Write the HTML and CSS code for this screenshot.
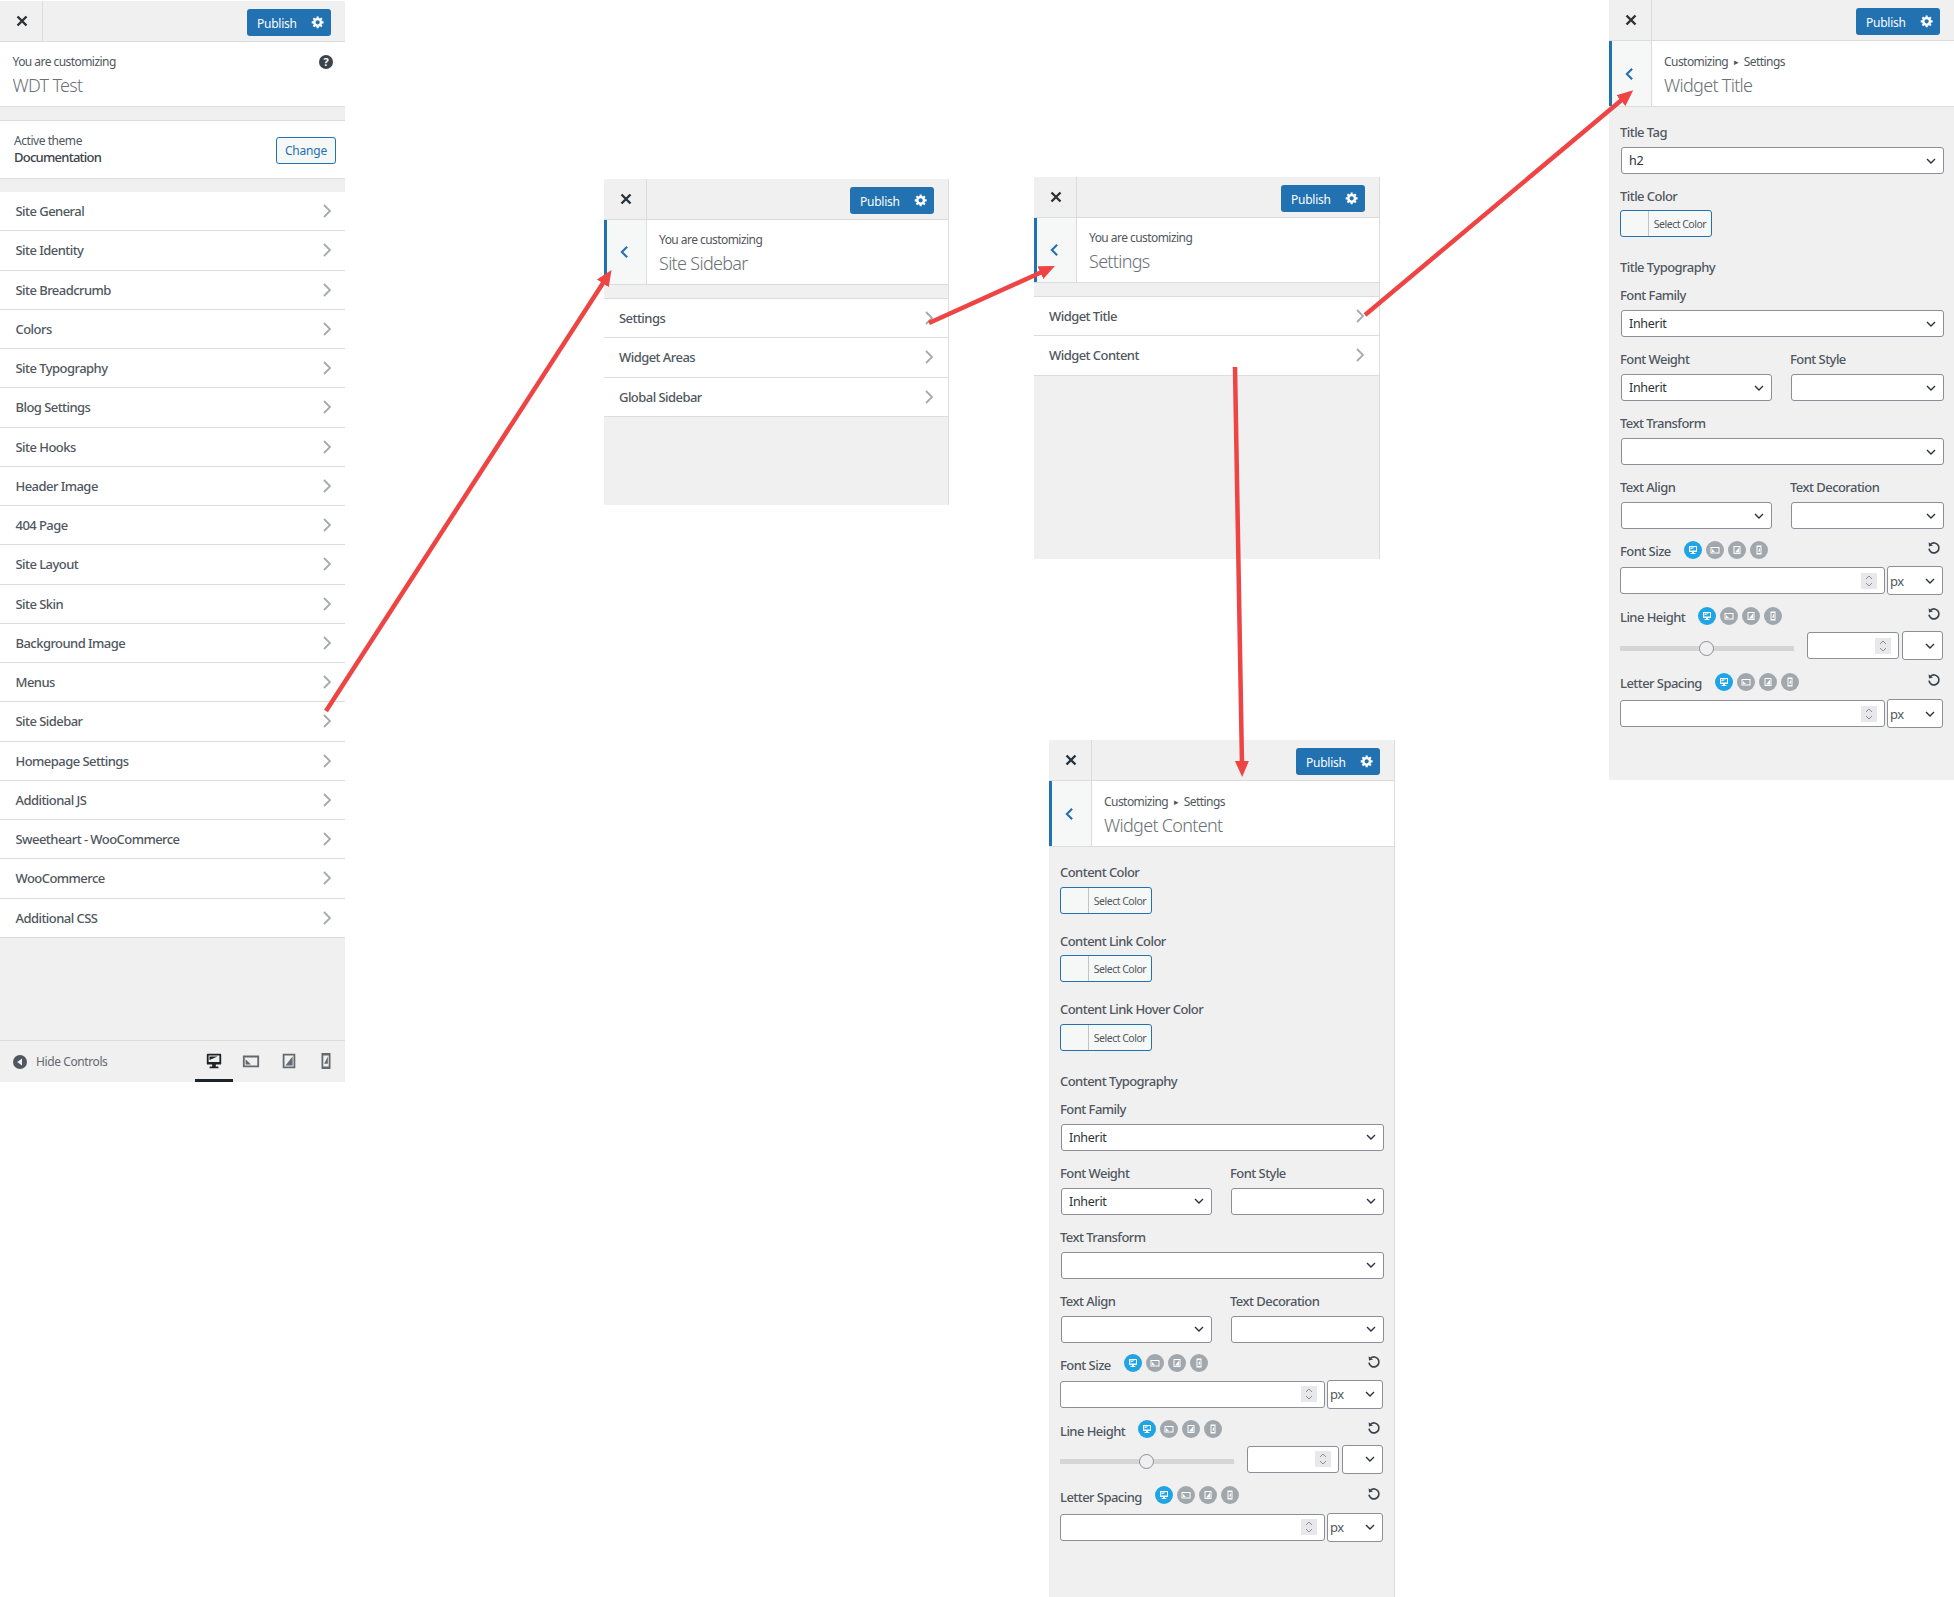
FILE: index.html
```html
<!DOCTYPE html>
<html lang="en">
<head>
<meta charset="utf-8">
<title>Customizer panels</title>
<link rel="stylesheet" href="styles.css">
</head>
<body>
<svg class="defs" aria-hidden="true">
  <symbol id="i-gear" viewBox="0 0 20 20"><path d="M18 12h-2.18c-.17.7-.44 1.35-.81 1.93l1.54 1.54-2.1 2.1-1.54-1.54c-.58.36-1.23.63-1.91.79V19H8v-2.18c-.68-.16-1.33-.43-1.91-.79l-1.54 1.54-2.12-2.12 1.54-1.54c-.36-.58-.63-1.23-.79-1.91H1V9.03h2.17c.16-.7.44-1.35.8-1.94L2.43 5.55l2.1-2.1 1.54 1.54c.58-.37 1.24-.64 1.93-.81V2h3v2.18c.68.16 1.33.43 1.91.79l1.54-1.54 2.12 2.12-1.54 1.54c.36.59.64 1.24.8 1.94H18V12zm-8.5 1.5c1.66 0 3-1.34 3-3s-1.34-3-3-3-3 1.34-3 3 1.34 3 3 3z"/></symbol>
  <symbol id="i-close" viewBox="0 0 14 14"><path d="M2.5 2.5l9 9M11.5 2.5l-9 9" fill="none" stroke="currentColor" stroke-width="2.4"/></symbol>
  <symbol id="i-next" viewBox="0 0 10 16"><path d="M2 2l6 6-6 6" fill="none" stroke="currentColor" stroke-width="1.8"/></symbol>
  <symbol id="i-back" viewBox="0 0 10 16"><path d="M8 2L2 8l6 6" fill="none" stroke="currentColor" stroke-width="2.4"/></symbol>
  <symbol id="i-chev" viewBox="0 0 10 6"><path d="M1 1l4 4 4-4" fill="none" stroke="currentColor" stroke-width="1.4"/></symbol>
  <symbol id="i-spin" viewBox="0 0 16 16"><path d="M5 6l3-3 3 3M5 10l3 3 3-3" fill="none" stroke="#8c8f94" stroke-width="1"/></symbol>
  <symbol id="i-desktop" viewBox="0 0 20 20"><path d="M3 2h14c.55 0 1 .45 1 1v10c0 .55-.45 1-1 1h-5v2h2c.55 0 1 .45 1 1v1H5v-1c0-.55.45-1 1-1h2v-2H3c-.55 0-1-.45-1-1V3c0-.55.45-1 1-1zm13 9V4H4v7h12zM5 5h9L5 9V5z"/></symbol>
  <symbol id="i-land" viewBox="0 0 20 20"><path d="M1 4h18v13H1zM3 6v9h14V6zM4 8l6 6H4z" fill-rule="evenodd"/></symbol>
  <symbol id="i-port" viewBox="0 0 20 20"><path d="M3 2h14v16H3zM5 4v12h10V4zM14 5v10H6l8-10z" fill-rule="evenodd"/></symbol>
  <symbol id="i-mobile" viewBox="0 0 20 20"><path d="M5 1h10v18H5zM7 4v12h6V4zM12 5v8H8l4-8z" fill-rule="evenodd"/></symbol>
  <symbol id="i-reset" viewBox="0 0 14 14"><path d="M3.6 3.2A5 5 0 1 1 2 7.6" fill="none" stroke="currentColor" stroke-width="1.7"/><path d="M1.6 1.2l.4 4.2 4-.9z"/></symbol>
  <symbol id="i-hide" viewBox="0 0 14 14"><circle cx="7" cy="7" r="7"/><path d="M9 3.6v6.8L4.2 7z" fill="#f0f0f1"/></symbol>
</svg>

<main class="canvas">

  <section class="panel panel-root">
    <header class="topbar">
      <div class="close"><svg class="ic-close"><use href="#i-close"/></svg></div>
      <div class="publish"><span>Publish</span><svg class="ic-gear"><use href="#i-gear"/></svg></div>
    </header>
    <div class="info info-root">
      <div class="info-sub">You are customizing</div>
      <div class="info-title">WDT Test</div>
      <span class="help">?</span>
    </div>
    <div class="theme">
      <div>
        <div class="theme-sub">Active theme</div>
        <div class="theme-name">Documentation</div>
      </div>
      <div class="change">Change</div>
    </div>
    <ul class="menu menu-root">
      <li class="item"><span>Site General</span><svg class="ic-next"><use href="#i-next"/></svg></li>
      <li class="item"><span>Site Identity</span><svg class="ic-next"><use href="#i-next"/></svg></li>
      <li class="item"><span>Site Breadcrumb</span><svg class="ic-next"><use href="#i-next"/></svg></li>
      <li class="item"><span>Colors</span><svg class="ic-next"><use href="#i-next"/></svg></li>
      <li class="item"><span>Site Typography</span><svg class="ic-next"><use href="#i-next"/></svg></li>
      <li class="item"><span>Blog Settings</span><svg class="ic-next"><use href="#i-next"/></svg></li>
      <li class="item"><span>Site Hooks</span><svg class="ic-next"><use href="#i-next"/></svg></li>
      <li class="item"><span>Header Image</span><svg class="ic-next"><use href="#i-next"/></svg></li>
      <li class="item"><span>404 Page</span><svg class="ic-next"><use href="#i-next"/></svg></li>
      <li class="item"><span>Site Layout</span><svg class="ic-next"><use href="#i-next"/></svg></li>
      <li class="item"><span>Site Skin</span><svg class="ic-next"><use href="#i-next"/></svg></li>
      <li class="item"><span>Background Image</span><svg class="ic-next"><use href="#i-next"/></svg></li>
      <li class="item"><span>Menus</span><svg class="ic-next"><use href="#i-next"/></svg></li>
      <li class="item"><span>Site Sidebar</span><svg class="ic-next"><use href="#i-next"/></svg></li>
      <li class="item"><span>Homepage Settings</span><svg class="ic-next"><use href="#i-next"/></svg></li>
      <li class="item"><span>Additional JS</span><svg class="ic-next"><use href="#i-next"/></svg></li>
      <li class="item"><span>Sweetheart - WooCommerce</span><svg class="ic-next"><use href="#i-next"/></svg></li>
      <li class="item"><span>WooCommerce</span><svg class="ic-next"><use href="#i-next"/></svg></li>
      <li class="item"><span>Additional CSS</span><svg class="ic-next"><use href="#i-next"/></svg></li>
    </ul>
    <footer class="foot">
      <div class="hide"><svg class="ic-hide"><use href="#i-hide"/></svg><span>Hide Controls</span></div>
      <div class="tabs">
        <div class="tab tab-on"><svg class="ic-tab"><use href="#i-desktop"/></svg></div>
        <div class="tab"><svg class="ic-tab"><use href="#i-land"/></svg></div>
        <div class="tab"><svg class="ic-tab"><use href="#i-port"/></svg></div>
        <div class="tab"><svg class="ic-tab"><use href="#i-mobile"/></svg></div>
      </div>
    </footer>
  </section>

  <section class="panel panel-sidebar">
    <header class="topbar">
      <div class="close"><svg class="ic-close"><use href="#i-close"/></svg></div>
      <div class="publish"><span>Publish</span><svg class="ic-gear"><use href="#i-gear"/></svg></div>
    </header>
    <div class="info">
      <div class="back"><svg class="ic-back"><use href="#i-back"/></svg></div>
      <div class="info-text">
        <div class="info-sub">You are customizing</div>
        <div class="info-title">Site Sidebar</div>
      </div>
    </div>
    <ul class="menu">
      <li class="item"><span>Settings</span><svg class="ic-next"><use href="#i-next"/></svg></li>
      <li class="item"><span>Widget Areas</span><svg class="ic-next"><use href="#i-next"/></svg></li>
      <li class="item"><span>Global Sidebar</span><svg class="ic-next"><use href="#i-next"/></svg></li>
    </ul>
  </section>

  <section class="panel panel-settings">
    <header class="topbar">
      <div class="close"><svg class="ic-close"><use href="#i-close"/></svg></div>
      <div class="publish"><span>Publish</span><svg class="ic-gear"><use href="#i-gear"/></svg></div>
    </header>
    <div class="info">
      <div class="back"><svg class="ic-back"><use href="#i-back"/></svg></div>
      <div class="info-text">
        <div class="info-sub">You are customizing</div>
        <div class="info-title">Settings</div>
      </div>
    </div>
    <ul class="menu">
      <li class="item"><span>Widget Title</span><svg class="ic-next"><use href="#i-next"/></svg></li>
      <li class="item"><span>Widget Content</span><svg class="ic-next"><use href="#i-next"/></svg></li>
    </ul>
  </section>

  <section class="panel panel-title">
    <header class="topbar">
      <div class="close"><svg class="ic-close"><use href="#i-close"/></svg></div>
      <div class="publish"><span>Publish</span><svg class="ic-gear"><use href="#i-gear"/></svg></div>
    </header>
    <div class="info info-tall">
      <div class="back"><svg class="ic-back"><use href="#i-back"/></svg></div>
      <div class="info-text">
        <div class="info-sub">Customizing <i class="crumb">▸</i> Settings</div>
        <div class="info-title">Widget Title</div>
      </div>
    </div>
    <div class="controls">
      <div class="field">
        <label class="lbl">Title Tag</label>
        <div class="sel"><span>h2</span><svg class="ic-chev"><use href="#i-chev"/></svg></div>
      </div>
      <div class="field field-color">
        <label class="lbl">Title Color</label>
        <div class="color"><span class="swatch"></span><span class="color-txt">Select Color</span></div>
      </div>
      <div class="lbl heading">Title Typography</div>
      <div class="field">
        <label class="lbl">Font Family</label>
        <div class="sel"><span>Inherit</span><svg class="ic-chev"><use href="#i-chev"/></svg></div>
      </div>
      <div class="two">
        <div class="field">
          <label class="lbl">Font Weight</label>
          <div class="sel"><span>Inherit</span><svg class="ic-chev"><use href="#i-chev"/></svg></div>
        </div>
        <div class="field">
          <label class="lbl">Font Style</label>
          <div class="sel"><span></span><svg class="ic-chev"><use href="#i-chev"/></svg></div>
        </div>
      </div>
      <div class="field">
        <label class="lbl">Text Transform</label>
        <div class="sel"><span></span><svg class="ic-chev"><use href="#i-chev"/></svg></div>
      </div>
      <div class="two">
        <div class="field">
          <label class="lbl">Text Align</label>
          <div class="sel"><span></span><svg class="ic-chev"><use href="#i-chev"/></svg></div>
        </div>
        <div class="field">
          <label class="lbl">Text Decoration</label>
          <div class="sel"><span></span><svg class="ic-chev"><use href="#i-chev"/></svg></div>
        </div>
      </div>
      <div class="resp">
        <div class="resp-head">
          <label class="lbl">Font Size</label>
          <div class="devs">
            <span class="dev dev-on"><svg class="ic-dev"><use href="#i-desktop"/></svg></span>
            <span class="dev"><svg class="ic-dev"><use href="#i-land"/></svg></span>
            <span class="dev"><svg class="ic-dev"><use href="#i-port"/></svg></span>
            <span class="dev"><svg class="ic-dev"><use href="#i-mobile"/></svg></span>
          </div>
          <svg class="ic-reset"><use href="#i-reset"/></svg>
        </div>
        <div class="num-row">
          <div class="num"><span class="spin"><svg class="ic-spin"><use href="#i-spin"/></svg></span></div>
          <div class="unit"><span>px</span><svg class="ic-chev"><use href="#i-chev"/></svg></div>
        </div>
      </div>
      <div class="resp">
        <div class="resp-head">
          <label class="lbl">Line Height</label>
          <div class="devs">
            <span class="dev dev-on"><svg class="ic-dev"><use href="#i-desktop"/></svg></span>
            <span class="dev"><svg class="ic-dev"><use href="#i-land"/></svg></span>
            <span class="dev"><svg class="ic-dev"><use href="#i-port"/></svg></span>
            <span class="dev"><svg class="ic-dev"><use href="#i-mobile"/></svg></span>
          </div>
          <svg class="ic-reset"><use href="#i-reset"/></svg>
        </div>
        <div class="slide-row">
          <div class="track"><span class="thumb"></span></div>
          <div class="num"><span class="spin"><svg class="ic-spin"><use href="#i-spin"/></svg></span></div>
          <div class="unit"><span></span><svg class="ic-chev"><use href="#i-chev"/></svg></div>
        </div>
      </div>
      <div class="resp">
        <div class="resp-head">
          <label class="lbl">Letter Spacing</label>
          <div class="devs">
            <span class="dev dev-on"><svg class="ic-dev"><use href="#i-desktop"/></svg></span>
            <span class="dev"><svg class="ic-dev"><use href="#i-land"/></svg></span>
            <span class="dev"><svg class="ic-dev"><use href="#i-port"/></svg></span>
            <span class="dev"><svg class="ic-dev"><use href="#i-mobile"/></svg></span>
          </div>
          <svg class="ic-reset"><use href="#i-reset"/></svg>
        </div>
        <div class="num-row">
          <div class="num"><span class="spin"><svg class="ic-spin"><use href="#i-spin"/></svg></span></div>
          <div class="unit"><span>px</span><svg class="ic-chev"><use href="#i-chev"/></svg></div>
        </div>
      </div>
    </div>
  </section>

  <section class="panel panel-content">
    <header class="topbar">
      <div class="close"><svg class="ic-close"><use href="#i-close"/></svg></div>
      <div class="publish"><span>Publish</span><svg class="ic-gear"><use href="#i-gear"/></svg></div>
    </header>
    <div class="info info-tall">
      <div class="back"><svg class="ic-back"><use href="#i-back"/></svg></div>
      <div class="info-text">
        <div class="info-sub">Customizing <i class="crumb">▸</i> Settings</div>
        <div class="info-title">Widget Content</div>
      </div>
    </div>
    <div class="controls">
      <div class="field field-color">
        <label class="lbl">Content Color</label>
        <div class="color"><span class="swatch"></span><span class="color-txt">Select Color</span></div>
      </div>
      <div class="field field-color">
        <label class="lbl">Content Link Color</label>
        <div class="color"><span class="swatch"></span><span class="color-txt">Select Color</span></div>
      </div>
      <div class="field field-color">
        <label class="lbl">Content Link Hover Color</label>
        <div class="color"><span class="swatch"></span><span class="color-txt">Select Color</span></div>
      </div>
      <div class="lbl heading">Content Typography</div>
      <div class="field">
        <label class="lbl">Font Family</label>
        <div class="sel"><span>Inherit</span><svg class="ic-chev"><use href="#i-chev"/></svg></div>
      </div>
      <div class="two">
        <div class="field">
          <label class="lbl">Font Weight</label>
          <div class="sel"><span>Inherit</span><svg class="ic-chev"><use href="#i-chev"/></svg></div>
        </div>
        <div class="field">
          <label class="lbl">Font Style</label>
          <div class="sel"><span></span><svg class="ic-chev"><use href="#i-chev"/></svg></div>
        </div>
      </div>
      <div class="field">
        <label class="lbl">Text Transform</label>
        <div class="sel"><span></span><svg class="ic-chev"><use href="#i-chev"/></svg></div>
      </div>
      <div class="two">
        <div class="field">
          <label class="lbl">Text Align</label>
          <div class="sel"><span></span><svg class="ic-chev"><use href="#i-chev"/></svg></div>
        </div>
        <div class="field">
          <label class="lbl">Text Decoration</label>
          <div class="sel"><span></span><svg class="ic-chev"><use href="#i-chev"/></svg></div>
        </div>
      </div>
      <div class="resp">
        <div class="resp-head">
          <label class="lbl">Font Size</label>
          <div class="devs">
            <span class="dev dev-on"><svg class="ic-dev"><use href="#i-desktop"/></svg></span>
            <span class="dev"><svg class="ic-dev"><use href="#i-land"/></svg></span>
            <span class="dev"><svg class="ic-dev"><use href="#i-port"/></svg></span>
            <span class="dev"><svg class="ic-dev"><use href="#i-mobile"/></svg></span>
          </div>
          <svg class="ic-reset"><use href="#i-reset"/></svg>
        </div>
        <div class="num-row">
          <div class="num"><span class="spin"><svg class="ic-spin"><use href="#i-spin"/></svg></span></div>
          <div class="unit"><span>px</span><svg class="ic-chev"><use href="#i-chev"/></svg></div>
        </div>
      </div>
      <div class="resp">
        <div class="resp-head">
          <label class="lbl">Line Height</label>
          <div class="devs">
            <span class="dev dev-on"><svg class="ic-dev"><use href="#i-desktop"/></svg></span>
            <span class="dev"><svg class="ic-dev"><use href="#i-land"/></svg></span>
            <span class="dev"><svg class="ic-dev"><use href="#i-port"/></svg></span>
            <span class="dev"><svg class="ic-dev"><use href="#i-mobile"/></svg></span>
          </div>
          <svg class="ic-reset"><use href="#i-reset"/></svg>
        </div>
        <div class="slide-row">
          <div class="track"><span class="thumb"></span></div>
          <div class="num"><span class="spin"><svg class="ic-spin"><use href="#i-spin"/></svg></span></div>
          <div class="unit"><span></span><svg class="ic-chev"><use href="#i-chev"/></svg></div>
        </div>
      </div>
      <div class="resp">
        <div class="resp-head">
          <label class="lbl">Letter Spacing</label>
          <div class="devs">
            <span class="dev dev-on"><svg class="ic-dev"><use href="#i-desktop"/></svg></span>
            <span class="dev"><svg class="ic-dev"><use href="#i-land"/></svg></span>
            <span class="dev"><svg class="ic-dev"><use href="#i-port"/></svg></span>
            <span class="dev"><svg class="ic-dev"><use href="#i-mobile"/></svg></span>
          </div>
          <svg class="ic-reset"><use href="#i-reset"/></svg>
        </div>
        <div class="num-row">
          <div class="num"><span class="spin"><svg class="ic-spin"><use href="#i-spin"/></svg></span></div>
          <div class="unit"><span>px</span><svg class="ic-chev"><use href="#i-chev"/></svg></div>
        </div>
      </div>
    </div>
  </section>

  <svg class="arrows" viewBox="0 0 1954 1597" aria-hidden="true">
    <defs>
      <marker id="head" markerUnits="userSpaceOnUse" markerWidth="18" markerHeight="16" refX="4" refY="8" orient="auto">
        <path d="M0 1L16 8 0 15z"/>
      </marker>
    </defs>
    <line class="arrow" x1="326" y1="711" x2="605" y2="280"/>
    <line class="arrow" x1="929" y1="323" x2="1044" y2="271"/>
    <line class="arrow" x1="1365" y1="315" x2="1624" y2="98"/>
    <line class="arrow" x1="1235" y1="367" x2="1242" y2="765"/>
  </svg>
</main>
</body>
</html>
```
FILE: styles.css
```css
* { box-sizing: border-box; }
html, body { margin: 0; padding: 0; background: #fff; }
body {
  font-family: "Noto Sans", "Open Sans", sans-serif;
  font-size: 13px;
  color: #50575e;
}
.defs { position: absolute; width: 0; height: 0; overflow: hidden; }
.canvas { position: relative; width: 1954px; height: 1597px; overflow: hidden; }

/* Windows placed on the free canvas */
.panel {
  position: absolute;
  display: flex;
  flex-direction: column;
  background: #f0f0f1;
}
.panel-root { left: 0; top: 1px; width: 345px; height: 1081px; }
.panel-sidebar { left: 604px; top: 179px; width: 345px; height: 326px; border-right: 1px solid #dcdcde; }
.panel-settings { left: 1034px; top: 177px; width: 346px; height: 382px; border-right: 1px solid #dcdcde; }
.panel-title { left: 1609px; top: 0; width: 345px; height: 780px; }
.panel-content { left: 1049px; top: 740px; width: 346px; height: 857px; border-right: 1px solid #dcdcde; }

/* Top bar */
.topbar {
  display: flex;
  align-items: center;
  justify-content: space-between;
  height: 41px;
  flex: none;
  border-bottom: 1px solid #dcdcde;
  padding-right: 14px;
}
.close {
  width: 43px;
  height: 40px;
  display: flex;
  align-items: center;
  justify-content: center;
  padding-left: 1px;
  border-right: 1px solid #dcdcde;
  color: #2c3338;
}
.ic-close { width: 14px; height: 14px; fill: currentColor; }
.publish {
  width: 84px;
  height: 27px;
  margin-top: 2px;
  display: flex;
  align-items: center;
  justify-content: space-between;
  padding: 2px 6px 0 10px;
  background: #2271b1;
  border-radius: 3px;
  color: #fff;
  font-size: 12px;
  letter-spacing: -0.25px;
}
.ic-gear { width: 14px; height: 14px; fill: #fff; margin-top: -3px; }

/* Section info */
.info {
  display: flex;
  position: relative;
  height: 65px;
  flex: none;
  background: #fff;
  border-bottom: 1px solid #dcdcde;
  margin-bottom: 13px;
}
.info-tall { height: 66px; margin-bottom: 0; }
.info-tall .info-text { padding-top: 12px; }
.info-root { display: block; padding: 11px 0 0 12.5px; margin-bottom: 13px; }
.back {
  width: 43px;
  flex: none;
  display: flex;
  align-items: center;
  justify-content: center;
  padding-right: 5px;
  background: #f6f7f7;
  border-left: 3px solid #2271b1;
  border-right: 1px solid #dcdcde;
  color: #2271b1;
}
.ic-back { width: 9px; height: 14px; }
.info-text { padding: 11px 0 0 12px; }
.info-sub { font-size: 12px; line-height: 18px; color: #50575e; letter-spacing: -0.55px; }
.info-title { font-size: 18px; line-height: 28px; font-weight: 300; color: #6b7075; letter-spacing: -0.7px; }
.crumb { font-style: normal; font-size: 9px; margin: 0 3px; vertical-align: 1px; }
.help {
  position: absolute;
  right: 12px;
  top: 13px;
  width: 14px;
  height: 14px;
  border-radius: 50%;
  background: #3c434a;
  color: #fff;
  font-size: 11px;
  line-height: 14px;
  font-weight: 700;
  text-align: center;
}

/* Active theme */
.theme {
  display: flex;
  align-items: center;
  justify-content: space-between;
  height: 59px;
  flex: none;
  padding: 0 9px 0 14px;
  background: #fff;
  border-top: 1px solid #dcdcde;
  border-bottom: 1px solid #dcdcde;
  margin-bottom: 13px;
}
.theme-sub { font-size: 12px; line-height: 16px; letter-spacing: -0.45px; }
.theme-name { font-size: 13px; line-height: 17px; font-weight: 500; color: #3c434a; letter-spacing: -0.75px; }
.change {
  width: 60px;
  height: 27px;
  margin-top: 1px;
  border: 1px solid #2271b1;
  border-radius: 3px;
  background: #f6f7f7;
  color: #2271b1;
  font-size: 12px;
  line-height: 26px;
  text-align: center;
  letter-spacing: -0.2px;
}

/* Menu lists */
.menu { list-style: none; margin: 0; padding: 0; background: #fff; border-top: 1px solid #dcdcde; }
.menu-root { border-top: 0; }
.item {
  display: flex;
  align-items: center;
  justify-content: space-between;
  height: 39.25px;
  padding: 0 14px 0 15px;
  border-bottom: 1px solid #dcdcde;
  font-weight: 500;
  font-size: 13px;
  color: #50575e;
  letter-spacing: -0.55px;
}
.menu-root .item { padding: 0 13.5px 0 15.5px; }
.ic-next { width: 10px; height: 16px; color: #a7aaad; }

/* Footer */
.foot {
  margin-top: auto;
  height: 42px;
  flex: none;
  display: flex;
  align-items: stretch;
  justify-content: space-between;
  border-top: 1px solid #dcdcde;
  padding-left: 13px;
}
.hide { display: flex; align-items: center; gap: 9px; font-size: 12px; color: #646970; letter-spacing: -0.4px; }
.ic-hide { width: 14px; height: 14px; fill: #50575e; }
.tabs { display: flex; }
.tab {
  width: 37.5px;
  display: flex;
  align-items: center;
  justify-content: center;
  padding-top: 1px;
  border-bottom: 3px solid transparent;
  color: #646970;
}
.tab-on { color: #1d2327; border-bottom-color: #1d2327; }
.ic-tab { width: 18px; height: 18px; fill: currentColor; }

/* Controls */
.controls { padding: 16px 10px 0 11px; }
.lbl { display: block; font-size: 13px; line-height: 18px; font-weight: 500; color: #50575e; letter-spacing: -0.55px; }
.field { margin-bottom: 13px; }
.field-color { margin-bottom: 18px; }
.heading { margin: 21px 0 10px; }
.field .lbl { margin-bottom: 6px; }
.field-color .lbl { margin-bottom: 5.5px; }
.panel-title .field-color .lbl { margin-bottom: 5px; }
.two { display: grid; grid-template-columns: 170px 154px; }
.sel {
  display: flex;
  align-items: center;
  justify-content: space-between;
  height: 27px;
  margin-left: 1px;
  padding: 0 7px 0 7px;
  background: #fff;
  border: 1px solid #8c8f94;
  border-radius: 3px;
  font-size: 12.5px;
  color: #2c3338;
  letter-spacing: -0.3px;
}
.two .field:first-child .sel { width: 151px; }
.ic-chev { width: 10px; height: 6px; flex: none; color: #2c3338; }
.color {
  display: flex;
  width: 92px;
  height: 27px;
  border: 1px solid #2271b1;
  border-radius: 3px;
  background: #f6f7f7;
  overflow: hidden;
}
.swatch { width: 28px; flex: none; border-right: 1px solid #c3c4c7; }
.color-txt { flex: 1; text-align: center; font-size: 10.5px; line-height: 26px; color: #50575e; letter-spacing: -0.5px; }

/* Responsive number controls */
.resp { margin-bottom: 15px; }
.resp-head { display: flex; align-items: center; height: 18px; margin-bottom: 6px; }
.resp:last-child .resp-head { margin-bottom: 7px; }
.devs { display: flex; gap: 4px; margin-left: 13px; margin-top: -3px; }
.dev {
  width: 18px;
  height: 18px;
  display: flex;
  align-items: center;
  justify-content: center;
  border-radius: 50%;
  background: #a0a8ae;
}
.dev-on { background: #1fa5e6; }
.ic-dev { width: 10px; height: 10px; fill: #fff; }
.ic-reset { width: 14px; height: 14px; margin-left: auto; margin-right: 3px; margin-top: -6px; color: #3c434a; fill: currentColor; }
.num-row { display: grid; grid-template-columns: 265px 56px; gap: 2px; align-items: center; height: 27px; }
.slide-row { display: flex; align-items: center; height: 27px; }
.slide-row .track { width: 174px; flex: none; margin-top: 5px; }
.slide-row .num { width: 92px; flex: none; margin-left: 13px; }
.slide-row .unit { width: 41px; flex: none; margin-left: 3px; }
.num {
  display: flex;
  align-items: center;
  justify-content: flex-end;
  height: 27px;
  padding-right: 7px;
  background: #fff;
  border: 1px solid #8c8f94;
  border-radius: 3px;
}
.spin { display: flex; width: 16px; height: 16px; background: #e8e8ea; }
.ic-spin { width: 16px; height: 16px; }
.unit {
  display: flex;
  align-items: center;
  justify-content: space-between;
  height: 29px;
  padding: 0 7px 0 2px;
  background: #fff;
  border: 1px solid #8c8f94;
  border-radius: 3px;
  font-size: 13px;
  color: #50575e;
  letter-spacing: -0.6px;
}
.track { position: relative; height: 5px; background: #d5d5d6; }
.thumb {
  position: absolute;
  left: 79px;
  top: -5px;
  width: 15px;
  height: 15px;
  border-radius: 50%;
  background: #f0f0f1;
  border: 1px solid #8c8f94;
}

/* Annotation arrows over the canvas */
.arrows { position: absolute; left: 0; top: 0; width: 1954px; height: 1597px; pointer-events: none; fill: #ee4444; }
.arrow { stroke: #ee4444; stroke-width: 4.5; marker-end: url(#head); }
```
